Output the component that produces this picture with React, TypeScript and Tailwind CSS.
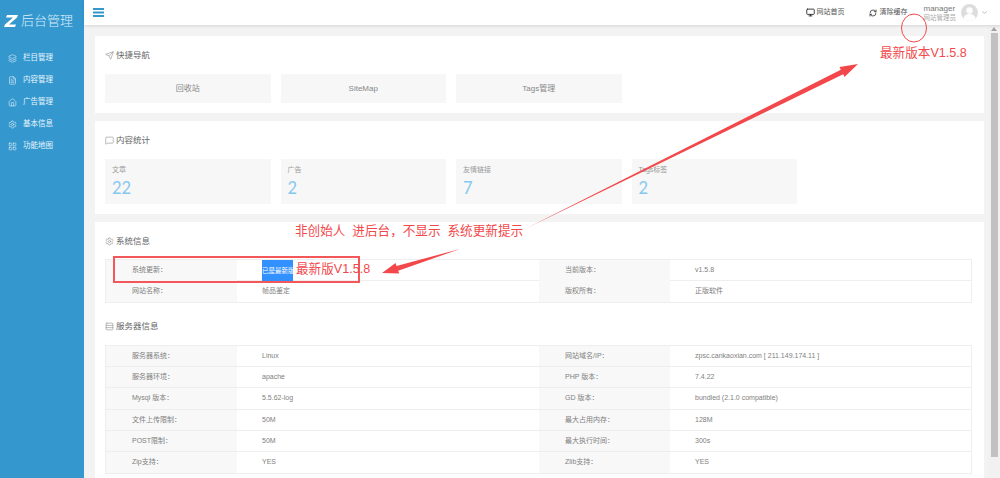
import { ChevronDown, FileText, House, Layers, LayoutGrid, MessageSquare, Monitor, RefreshCw, Rows3, Send, Settings } from 'lucide-react';
import React from 'react';

const navItems = [
  { label: '栏目管理', Icon: Layers },
  { label: '内容管理', Icon: FileText },
  { label: '广告管理', Icon: House },
  { label: '基本信息', Icon: Settings },
  { label: '功能地图', Icon: LayoutGrid },
];

const quickLinks = ['回收站', 'SiteMap', 'Tags管理'];

const stats = [
  { label: '文章', value: '22' },
  { label: '广告', value: '2' },
  { label: '友情链接', value: '7' },
  { label: 'Tags标签', value: '2' },
];

const systemRows = [
  ['系统更新：', '已是最新版', '当前版本：', 'v1.5.8'],
  ['网站名称：', '帧品鉴定', '版权所有：', '正版软件'],
];

const serverRows = [
  ['服务器系统：', 'Linux', '网站域名/IP：', 'zpsc.cankaoxian.com [ 211.149.174.11 ]'],
  ['服务器环境：', 'apache', 'PHP 版本：', '7.4.22'],
  ['Mysql 版本：', '5.5.62-log', 'GD 版本：', 'bundled (2.1.0 compatible)'],
  ['文件上传限制：', '50M', '最大占用内存：', '128M'],
  ['POST限制：', '50M', '最大执行时间：', '300s'],
  ['Zip支持：', 'YES', 'Zlib支持：', 'YES'],
];

function Heading({ icon, title }: { icon: React.ReactNode; title: string }) {
  return (
    <div className="flex h-[12px] items-center gap-[2px] text-[8.5px] text-[#666]">
      {icon}
      <span>{title}</span>
    </div>
  );
}

function InfoTable({ rows }: { rows: string[][] }) {
  return (
    <div className="w-[867px] border-t border-l border-[#eeeeee] text-[7px] text-[#808080]">
      {rows.map((row) => (
        <div key={row[0]} className="grid h-[21.33px] grid-cols-[131px_302px_131px_1fr] border-b border-[#eeeeee]">
          <div className="flex items-center bg-[#f8f8f8] pl-[26px]">{row[0]}</div>
          <div className="flex items-center pl-[25px]">
            {row[1] === '已是最新版' ? (
              <span className="flex h-[21px] w-[31px] items-center whitespace-nowrap bg-[#3390ff] text-[6.5px] text-white">{row[1]}</span>
            ) : (
              row[1]
            )}
          </div>
          <div className="flex items-center bg-[#f8f8f8] pl-[26px]">{row[2]}</div>
          <div className="flex items-center border-r border-[#eeeeee] pl-[25px]">{row[3]}</div>
        </div>
      ))}
    </div>
  );
}

export default function App() {
  return (
    <div
      className="relative flex h-[478px] w-[1000px] overflow-hidden bg-[#f3f3f3]"
      style={{ fontFamily: '"Liberation Sans", "Noto Sans CJK SC", sans-serif' }}
    >
      {/* 侧边栏 */}
      <aside className="flex w-[84px] shrink-0 flex-col bg-[#3498cf] text-white">
        <div className="flex h-[40px] items-center gap-[3px] pl-[4px]">
          <svg width="14" height="12" viewBox="0 0 14 12" className="mt-[2px] shrink-0">
            <path d="M3 0h11l-1 2.5-8 7h7l-1 2.5H0l1-2.5 8-7H2z" fill="#ffffff" />
          </svg>
          <span className="text-[13px] font-light leading-none text-[#d8ecf8]">后台管理</span>
        </div>
        <nav className="mt-[7px] flex flex-col">
          {navItems.map(({ label, Icon }) => (
            <div key={label} className="flex h-[22px] items-center gap-[6px] pl-[8px] text-[7.5px] text-[#e8f4fb]">
              <Icon className="h-[9px] w-[9px]" strokeWidth={1.5} />
              <span>{label}</span>
            </div>
          ))}
        </nav>
      </aside>

      <div className="flex min-w-0 flex-1 flex-col">
        {/* 顶栏 */}
        <header className="relative flex h-[25px] shrink-0 items-center bg-white pl-[9px] shadow-[0_1px_3px_rgba(0,0,0,0.12)]">
          <svg width="11" height="9" viewBox="0 0 11 9" fill="#3498cf">
            <rect width="11" height="2" />
            <rect y="3.5" width="11" height="2" />
            <rect y="7" width="11" height="2" />
          </svg>
          <div className="ml-auto flex items-center text-[7px] text-[#555]">
            <Monitor className="mr-[2px] h-[9px] w-[9px] text-[#333]" strokeWidth={2.5} />
            <span>网站首页</span>
            <RefreshCw className="ml-[24px] mr-[3px] h-[8px] w-[8px] text-[#333]" strokeWidth={2.4} />
            <span>清除缓存</span>
            <div className="ml-[16px] flex flex-col leading-[9px]">
              <span className="text-[8px] text-[#777]">manager</span>
              <span className="text-[6.5px] text-[#aaa]">网站管理员</span>
            </div>
            <svg width="17" height="17" viewBox="0 0 17 17" className="ml-[5px] rounded-full bg-[#dddddd]">
              <circle cx="8.5" cy="6.5" r="3.2" fill="#ffffff" />
              <path d="M2.5 15c0-3.5 3-5 6-5s6 1.5 6 5v2h-12z" fill="#ffffff" />
            </svg>
            <ChevronDown className="ml-[3px] mr-[12px] h-[7px] w-[7px] text-[#888]" strokeWidth={2} />
          </div>
        </header>

        <div className="flex min-h-0 flex-1">
          <main className="flex w-[893px] shrink-0 flex-col gap-[8px] pl-[11px] pt-[11px]">
            <section className="h-[77px] w-[889px] bg-white pl-[10px] pt-[13px]">
              <Heading icon={<Send className="h-[9px] w-[9px] text-[#888]" strokeWidth={1.5} />} title="快捷导航" />
              <div className="mt-[13px] flex gap-[10px]">
                {quickLinks.map((link) => (
                  <div key={link} className="flex h-[29px] w-[165.5px] items-center justify-center bg-[#f7f7f7] text-[8px] text-[#888]">
                    {link}
                  </div>
                ))}
              </div>
            </section>

            <section className="h-[93px] w-[889px] bg-white pl-[10px] pt-[13px]">
              <Heading icon={<MessageSquare className="h-[9px] w-[9px] text-[#888]" strokeWidth={1.5} />} title="内容统计" />
              <div className="mt-[13px] flex gap-[10px]">
                {stats.map((stat) => (
                  <div key={stat.label} className="h-[45px] w-[165.5px] bg-[#f7f7f7] pl-[7px] pt-[6px]">
                    <div className="text-[7px] leading-[9px] text-[#999]">{stat.label}</div>
                    <div className="mt-[3px] text-[16.5px] leading-[22px] text-[#85c7ee]" style={{ fontFamily: 'Lato, sans-serif' }}>
                      {stat.value}
                    </div>
                  </div>
                ))}
              </div>
            </section>

            <section className="w-[889px] flex-1 bg-white pl-[10px] pt-[13px]">
              <Heading icon={<Settings className="h-[9px] w-[9px] text-[#888]" strokeWidth={1.5} />} title="系统信息" />
              <div className="mt-[12px]">
                <InfoTable rows={systemRows} />
              </div>
              <div className="mt-[18px]">
                <Heading icon={<Rows3 className="h-[9px] w-[9px] text-[#888]" strokeWidth={1.5} />} title="服务器信息" />
              </div>
              <div className="mt-[12px]">
                <InfoTable rows={serverRows} />
              </div>
            </section>
          </main>

          {/* 滚动条 */}
          <div className="ml-auto flex w-[12px] flex-col items-center bg-[#f1f1f1]">
            <div className="mt-[2px] h-0 w-0 border-x-[3px] border-b-[4px] border-x-transparent border-b-[#a3a3a3]" />
            <div className="mt-[2px] h-[424px] w-[7px] bg-[#c1c1c1]" />
          </div>
        </div>
      </div>

      {/* 截图上的红色标注 */}
      <svg className="pointer-events-none absolute left-0 top-0 z-20" width="1000" height="478" viewBox="0 0 1000 478">
        <ellipse cx="914" cy="28" rx="12.5" ry="14" fill="none" stroke="#f2484b" strokeWidth="1" />
        <polygon points="525,229 843.2,74.2 844.5,77 858,64 839.5,67 840.8,69.8" fill="#f2484b" />
        <polygon points="460,249 398.2,270.7 399.2,273.5 382,273 395.5,263 396.5,265.9" fill="#f2484b" />
      </svg>
      <div className="absolute left-[113px] top-[256px] z-20 h-[27px] w-[247px] border-2 border-[#f4575a]" />
      <span className="absolute left-[880px] top-[45px] z-20 text-[12.6px] leading-[16px] text-[#f2484b]">最新版本V1.5.8</span>
      <span className="absolute left-[295px] top-[223px] z-20 whitespace-pre text-[12.6px] leading-[16px] text-[#f2484b]">非创始人  进后台，不显示  系统更新提示</span>
      <span className="absolute left-[296px] top-[261px] z-20 text-[12.6px] leading-[16px] text-[#f2484b]">最新版V1.5.8</span>
    </div>
  );
}
